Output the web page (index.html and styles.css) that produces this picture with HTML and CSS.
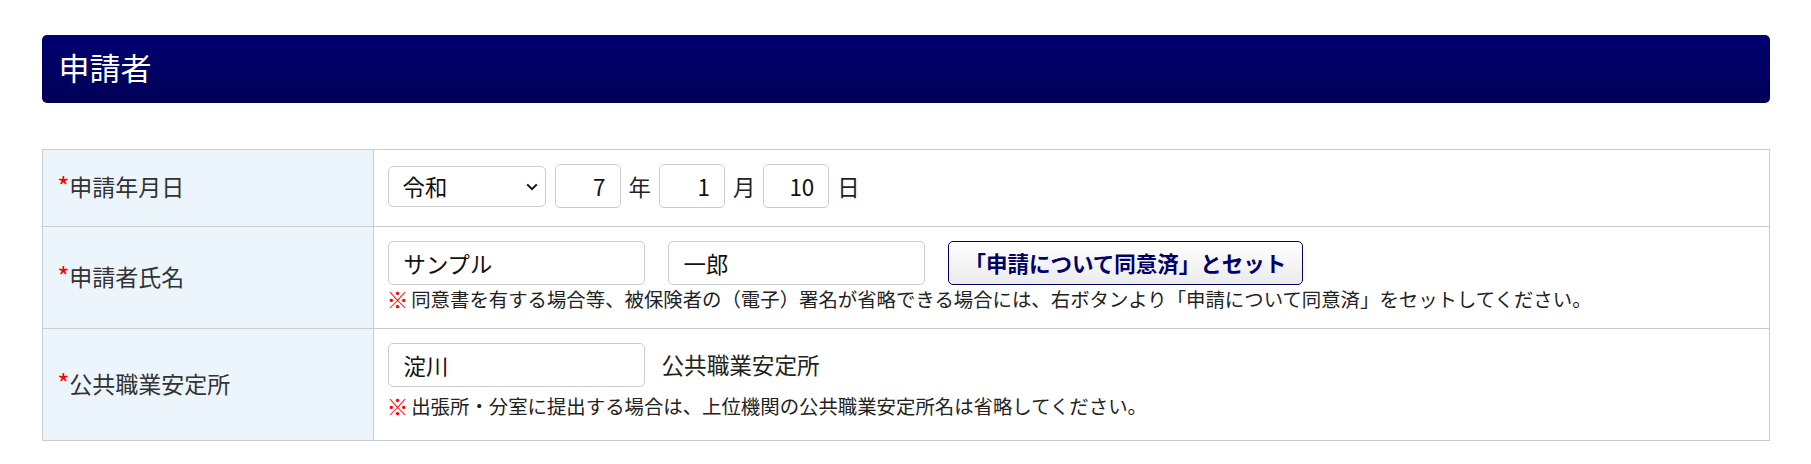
FILE: index.html
```html
<!DOCTYPE html>
<html lang="ja">
<head>
<meta charset="utf-8">
<title>申請者</title>
<link rel="stylesheet" href="styles.css">
</head>
<body>
<div class="page">
  <h2 class="section-title">申請者</h2>
  <div class="form">
    <div class="label"><span class="req">*</span>申請年月日</div>
    <div class="field">
      <div class="line">
        <span class="select-wrap">
          <select class="select"><option>令和</option></select>
          <svg class="chev" width="12" height="8" viewBox="0 0 12 8"><path d="M1.2 1.4 L6 6.2 L10.8 1.4" fill="none" stroke="#111" stroke-width="2"/></svg>
        </span>
        <input class="input num" type="text" value="7">
        <span class="unit">年</span>
        <input class="input num" type="text" value="1">
        <span class="unit">月</span>
        <input class="input num" type="text" value="10">
        <span class="unit">日</span>
      </div>
    </div>

    <div class="label"><span class="req">*</span>申請者氏名</div>
    <div class="field">
      <div class="line wide">
        <input class="input name" type="text" value="サンプル">
        <input class="input name" type="text" value="一郎">
        <button class="btn" type="button">「申請について同意済」とセット</button>
      </div>
      <div class="note note-tight"><span class="mark">※</span> 同意書を有する場合等、被保険者の（電子）署名が省略できる場合には、右ボタンより「申請について同意済」をセットしてください。</div>
    </div>

    <div class="label last"><span class="req">*</span>公共職業安定所</div>
    <div class="field last">
      <div class="line office">
        <input class="input name" type="text" value="淀川">
        <span class="suffix">公共職業安定所</span>
      </div>
      <div class="note note-loose"><span class="mark">※</span> 出張所・分室に提出する場合は、上位機関の公共職業安定所名は省略してください。</div>
    </div>
  </div>
</div>
</body>
</html>
```

FILE: styles.css
```css
* { box-sizing: border-box; }

html, body {
  margin: 0;
  padding: 0;
  background: #ffffff;
}

body {
  font-family: "Noto Sans CJK JP", "Noto Sans", sans-serif;
  color: #333333;
  padding-top: 35px;
}

.page {
  width: 1728px;
  margin: 0 auto;
}

.section-title {
  margin: 0;
  height: 68px;
  padding: 0 17px 4px;
  line-height: 64px;
  font-size: 31px;
  font-weight: 400;
  color: #ffffff;
  background: linear-gradient(#000070, #000058);
  border-radius: 5px;
}

.form {
  margin-top: 46px;
  display: grid;
  grid-template-columns: 331px 1fr;
  border: 1px solid #cccccc;
}

.label {
  display: flex;
  align-items: center;
  padding: 0 0 4px 15px;
  background: #edf5fc;
  border-right: 1px solid #cccccc;
  border-bottom: 1px solid #cccccc;
  font-size: 23px;
  line-height: 28px;
  color: #333333;
}

.req {
  display: inline-block;
  color: #ff0000;
  margin-right: 1px;
  transform: scale(1.15);
}

.field {
  padding: 14px 16px 18px 14px;
  border-bottom: 1px solid #cccccc;
}

.label.last,
.field.last {
  border-bottom: none;
}

.line {
  display: flex;
  align-items: center;
  gap: 8px;
}

.line.wide {
  gap: 23px;
}

.line.office {
  gap: 17px;
}

.select-wrap {
  position: relative;
  display: inline-flex;
  margin-right: 1px;
}

.select {
  appearance: none;
  -webkit-appearance: none;
  width: 158px;
  height: 41px;
  padding: 0 30px 0 14px;
  border: 1px solid #cccccc;
  border-radius: 5px;
  background: #ffffff;
  font-family: inherit;
  font-size: 22.4px;
  color: #111111;
  line-height: 39px;
}

.chev {
  position: absolute;
  right: 8px;
  top: 17px;
  pointer-events: none;
}

.input {
  height: 44px;
  border: 1px solid #cccccc;
  border-radius: 5px;
  background: #ffffff;
  font-family: inherit;
  font-size: 22.4px;
  color: #111111;
  padding: 0 15px;
  outline: none;
}

.input.num {
  width: 66px;
  text-align: right;
  padding-right: 14px;
}

.input.name {
  width: 257px;
}

.unit {
  font-size: 22.4px;
  color: #222222;
  line-height: 28px;
}

.suffix {
  font-size: 22.6px;
  color: #222222;
  line-height: 28px;
}

.btn {
  height: 44px;
  padding: 0 16px;
  border: 1px solid #000066;
  border-radius: 5px;
  background: linear-gradient(#ffffff, #ebebeb);
  color: #000066;
  font-family: inherit;
  font-size: 21.5px;
  font-weight: 700;
  line-height: 1;
  white-space: nowrap;
}

.note {
  font-size: 19.4px;
  line-height: 22px;
  color: #222222;
  white-space: nowrap;
}

.note-tight {
  margin-top: 3px;
}

.note-loose {
  margin-top: 8px;
  margin-bottom: 5px;
}

.mark {
  display: inline-block;
  color: #ff0000;
  font-weight: 700;
  transform: scale(1.12);
}
```
